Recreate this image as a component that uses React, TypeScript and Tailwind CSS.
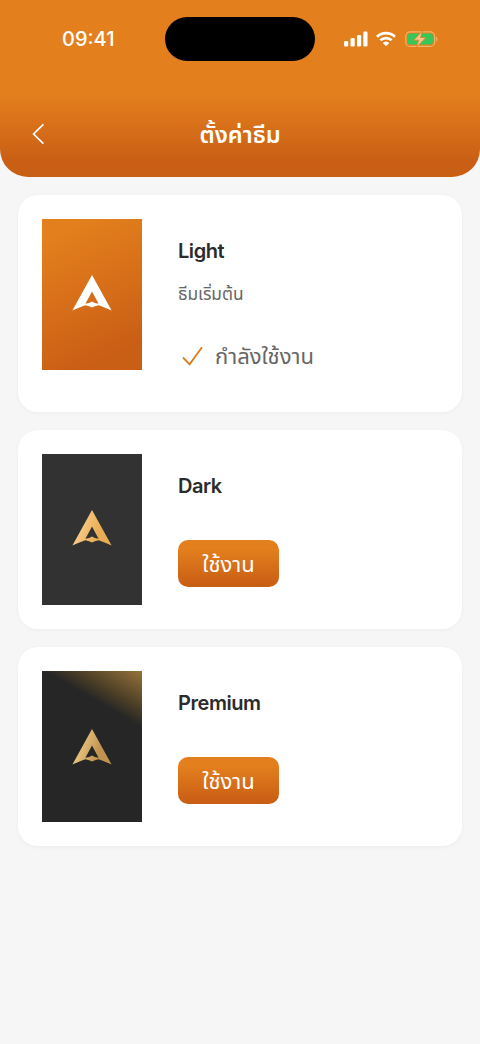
import { useState } from "react";

type Theme = {
  id: string;
  name: string;
  subtitle?: string;
  preview: string;
  logo: [string, string];
};

const themes: Theme[] = [
  {
    id: "light",
    name: "Light",
    subtitle: "ธีมเริ่มต้น",
    preview: "pb-1 bg-[linear-gradient(155deg,#e37f1d_12%,#c95e15_86%)]",
    logo: ["#ffffff", "#ffffff"],
  },
  {
    id: "dark",
    name: "Dark",
    preview: "pb-1 bg-[#323232]",
    logo: ["#f6c983", "#e8ad55"],
  },
  {
    id: "premium",
    name: "Premium",
    preview:
      "bg-[linear-gradient(30deg,#262626_73%,#4d3f27_82%,#96733a_100%)]",
    logo: ["#e6c37e", "#c09350"],
  },
];

function Logo({ id, colors }: { id: string; colors: [string, string] }) {
  return (
    <svg width="40" height="36" viewBox="0 0 40 36">
      <defs>
        <linearGradient id={`logo-${id}`} x1="0" y1="0" x2="1" y2="0.3">
          <stop offset="0.3" stopColor={colors[0]} />
          <stop offset="0.8" stopColor={colors[1]} />
        </linearGradient>
      </defs>
      <path
        fill={`url(#logo-${id})`}
        fillRule="evenodd"
        d="M20 0 39.6 35.6Q33 32.4 26.6 30.2Q22.5 30.8 20 32.6Q17.5 30.8 13.4 30.2Q7 32.4 0.4 35.6ZM20 16.6 13.4 28.8Q17.5 28.4 20 26.4Q22.5 28.4 26.6 28.8Z"
      />
    </svg>
  );
}

function StatusBar() {
  return (
    <div className="flex h-[78px] items-center justify-between pr-[42px] pl-[62px]">
      <span className="w-[103px] font-['Inter','Liberation_Sans',sans-serif] text-[20px] font-medium">
        09:41
      </span>
      <div className="h-11 w-[150px] rounded-full bg-black" />
      <div className="ml-[29px] flex items-center gap-2">
        <svg width="24" height="16" viewBox="0 0 24 16" fill="currentColor">
          <rect x="0" y="10" width="4.2" height="5.5" rx="1.2" />
          <rect x="6.5" y="7" width="4.2" height="8.5" rx="1.2" />
          <rect x="13" y="4" width="4.2" height="11.5" rx="1.2" />
          <rect x="19.3" y="0.5" width="4.2" height="15" rx="1.2" />
        </svg>
        <svg width="20" height="16" viewBox="0 0 20 16" fill="none">
          <path d="M1 5.7a13 13 0 0 1 18 0" stroke="currentColor" strokeWidth="2.7" />
          <path d="M4.4 9.3a8.1 8.1 0 0 1 11.2 0" stroke="currentColor" strokeWidth="2.7" />
          <path d="M10 15.2 6.7 11.9a4.9 4.9 0 0 1 6.6 0Z" fill="currentColor" />
        </svg>
        <svg width="34" height="18" viewBox="0 0 34 18">
          <rect x="1.8" y="1.8" width="28.8" height="14.6" rx="4.5" fill="none" stroke="#f3b26b" strokeWidth="1.2" />
          <rect x="3.6" y="3.6" width="25.2" height="11" rx="2.8" fill="#34c759" />
          <path d="M32 6.8c1.9.7 1.9 3.9 0 4.6Z" fill="#f3b26b" />
          <path d="m18.6 0.8-9 9.4h5l-2.2 7.2 9.6-9.9h-5.4Z" fill="#f7c58c" stroke="#e37f1d" strokeWidth="0.8" />
        </svg>
      </div>
    </div>
  );
}

function Header() {
  return (
    <header className="h-[177px] rounded-b-[28px] bg-[linear-gradient(180deg,#e37f1d_54%,#c95e15_92%)] text-white">
      <StatusBar />
      <div className="grid h-[112px] grid-cols-[48px_1fr_48px] items-center">
        <button aria-label="ย้อนกลับ" className="flex justify-end pr-[3px]">
          <svg width="13" height="22" viewBox="0 0 13 22" fill="none">
            <path d="M11.4 1.4 1.6 11l9.8 9.6" stroke="currentColor" strokeWidth="1.7" />
          </svg>
        </button>
        <h1 className="pt-0.5 text-center text-[23.5px] font-semibold">ตั้งค่าธีม</h1>
      </div>
    </header>
  );
}

export default function App() {
  const [active, setActive] = useState("light");

  return (
    <div className="min-h-screen bg-[#f6f6f6] font-['Inter','Noto_Sans_Thai','Noto_Sans',sans-serif]">
      <Header />

      <main className="flex flex-col gap-[18px] px-[18px] pt-[18px]">
        {themes.map((theme) => (
          <section
            key={theme.id}
            className="flex gap-9 rounded-[20px] bg-white p-6 shadow-[0_1px_4px_rgba(0,0,0,0.04)]"
          >
            <div
              className={`flex h-[151px] w-[100px] shrink-0 items-center justify-center ${theme.preview}`}
            >
              <Logo id={theme.id} colors={theme.logo} />
            </div>

            <div className="flex flex-col items-start pt-[18px]">
              <h2 className="text-[20px] leading-7 font-semibold tracking-[-0.45px] text-[#2b2b2b]">
                {theme.name}
              </h2>
              {theme.subtitle && (
                <p className="mt-[13px] text-[17.3px] leading-8 text-[#666]">
                  {theme.subtitle}
                </p>
              )}
              {active === theme.id ? (
                <div className="mt-6 mb-2.5 flex h-11 items-center gap-3 pl-1 text-[22px] text-[#666]">
                  <svg width="21" height="20" viewBox="0 0 21 20" fill="none">
                    <path d="m1 11.5 6.6 6.8L20 1.2" stroke="#dc7a1c" strokeWidth="1.8" />
                  </svg>
                  <span>กำลังใช้งาน</span>
                </div>
              ) : (
                <button
                  onClick={() => setActive(theme.id)}
                  className="mt-10 flex h-[47px] w-[101px] items-center justify-center rounded-[10px] bg-[linear-gradient(180deg,#e37f1d_20%,#c95e15_95%)] pt-0.5 text-[22px] text-white"
                >
                  ใช้งาน
                </button>
              )}
            </div>
          </section>
        ))}
      </main>
    </div>
  );
}
